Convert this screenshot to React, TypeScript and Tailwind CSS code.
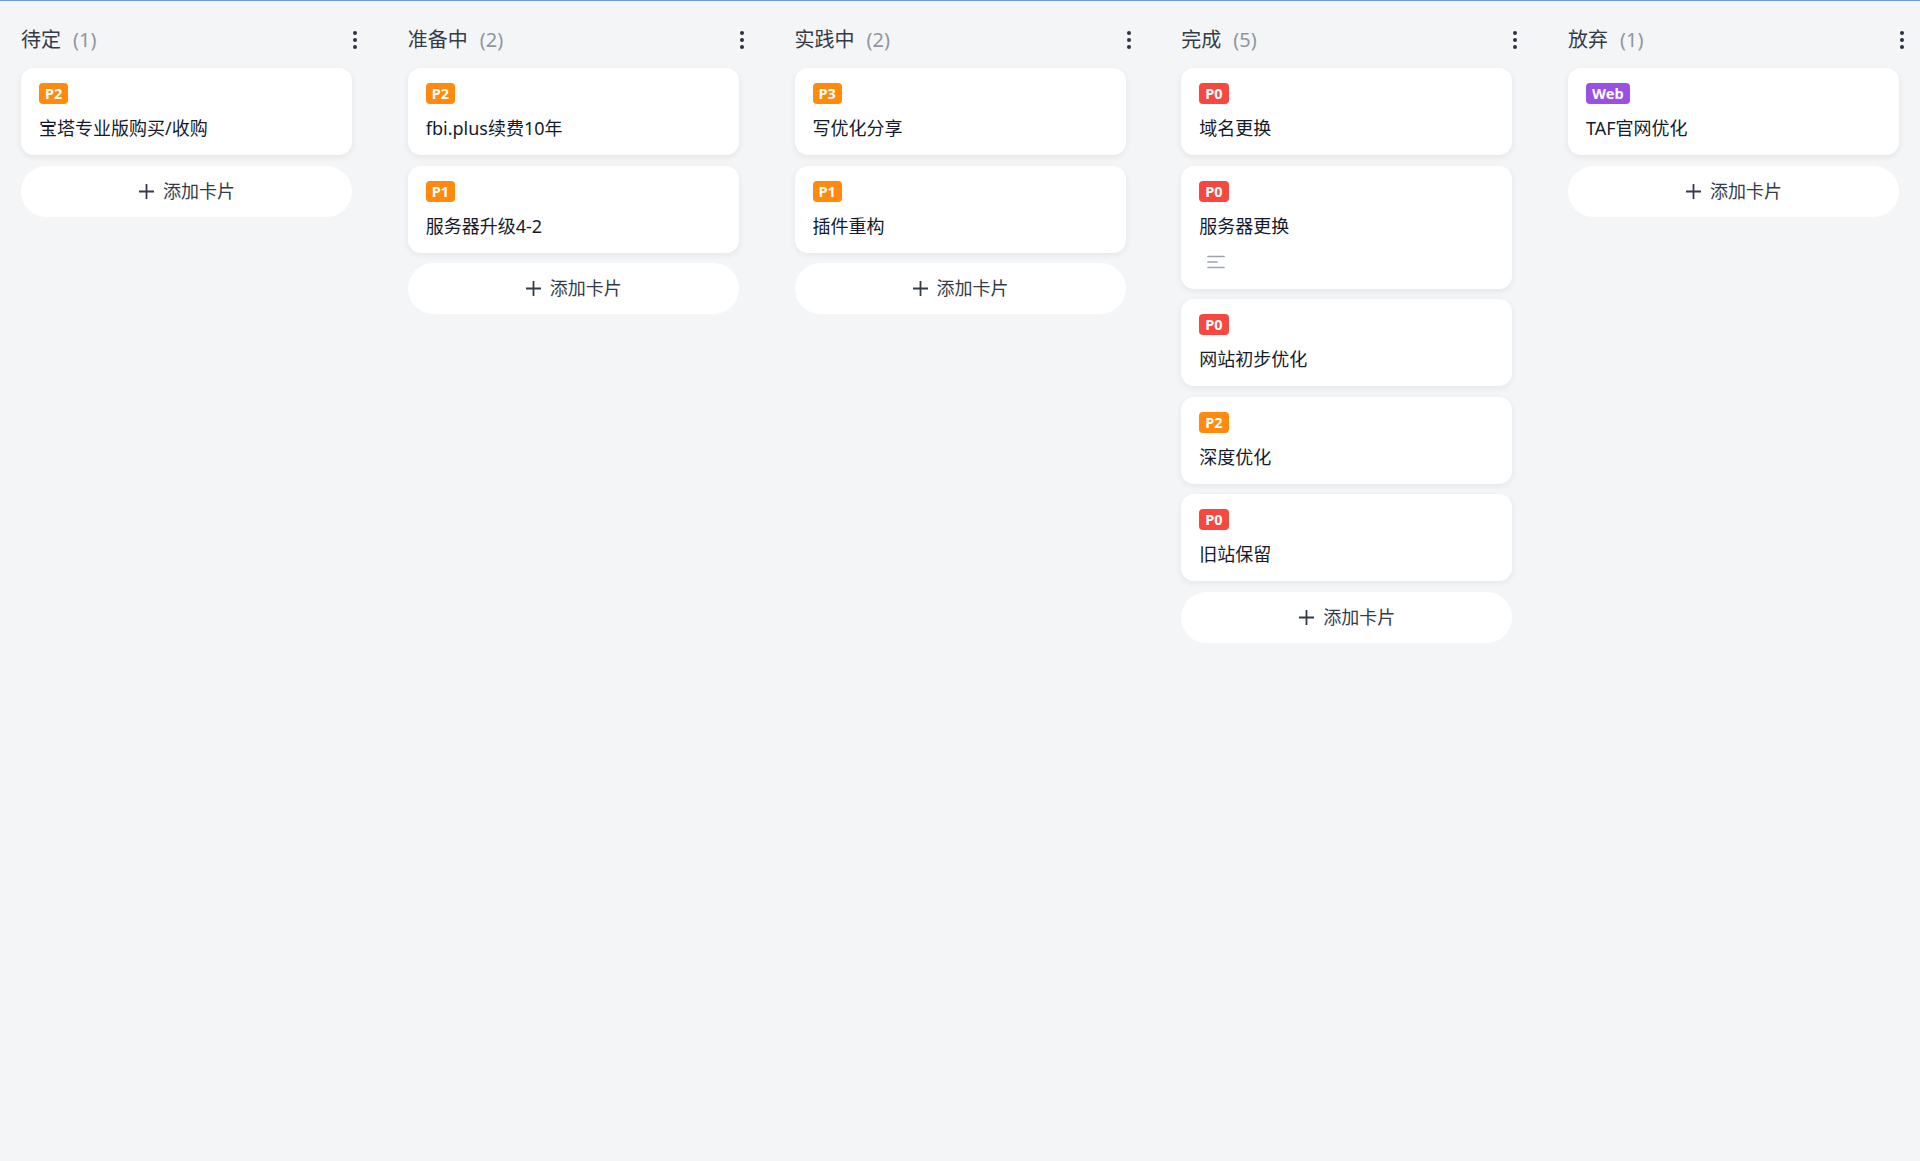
type Tag = 'P0' | 'P1' | 'P2' | 'P3' | 'Web';

type ICard = {
  tag: Tag;
  title: string;
  hasDesc?: boolean;
};

type IColumn = {
  title: string;
  cards: ICard[];
};

const columns: IColumn[] = [
  { title: '待定', cards: [{ tag: 'P2', title: '宝塔专业版购买/收购' }] },
  {
    title: '准备中',
    cards: [
      { tag: 'P2', title: 'fbi.plus续费10年' },
      { tag: 'P1', title: '服务器升级4-2' },
    ],
  },
  {
    title: '实践中',
    cards: [
      { tag: 'P3', title: '写优化分享' },
      { tag: 'P1', title: '插件重构' },
    ],
  },
  {
    title: '完成',
    cards: [
      { tag: 'P0', title: '域名更换' },
      { tag: 'P0', title: '服务器更换', hasDesc: true },
      { tag: 'P0', title: '网站初步优化' },
      { tag: 'P2', title: '深度优化' },
      { tag: 'P0', title: '旧站保留' },
    ],
  },
  { title: '放弃', cards: [{ tag: 'Web', title: 'TAF官网优化' }] },
];

const tagClass: Record<Tag, string> = {
  P0: 'bg-[#f6483f]',
  P1: 'bg-[#ff8a0d]',
  P2: 'bg-[#ff8a0d]',
  P3: 'bg-[#ff8a0d]',
  Web: 'bg-[#9c4fe3]',
};

function DescIcon() {
  return (
    <svg width="18" height="14" viewBox="0 0 18 14" fill="none">
      <path d="M1 1.5h16M1 7h9M1 12.5h16" stroke="#9ca3af" strokeWidth="1.7" strokeLinecap="round" />
    </svg>
  );
}

function PlusIcon() {
  return (
    <svg width="17" height="17" viewBox="0 0 17 17" fill="none">
      <path d="M8.5 1v15M1 8.5h15" stroke="#343b48" strokeWidth="1.8" />
    </svg>
  );
}

function TaskCard({ card }: { card: ICard }) {
  return (
    <div className="flex flex-col rounded-[13px] bg-white px-[18px] pt-[15px] pb-[13px] shadow-[0_2px_6px_rgba(15,23,42,0.07)]">
      <div className="flex">
        <span
          className={`flex h-[21px] items-center rounded-[4px] px-[6px] text-[14.5px] font-bold leading-none text-white ${tagClass[card.tag]}`}
        >
          {card.tag}
        </span>
      </div>
      <div className="mt-[10px] text-[18px] leading-[28px] text-[#141b2d]">{card.title}</div>
      {card.hasDesc && (
        <div className="mt-[8px] flex h-[28px] items-center pl-[8px]">
          <DescIcon />
        </div>
      )}
    </div>
  );
}

function Column({ column }: { column: IColumn }) {
  return (
    <div className="flex w-[331px] shrink-0 flex-col">
      <div className="mb-[12px] -mr-[7px] flex h-[32px] items-center justify-between">
        <div className="flex items-center text-[20px] leading-none">
          <span className="text-[#343b48]">{column.title}</span>
          <span className="ml-[12px] text-[#9096a2]">({column.cards.length})</span>
        </div>
        <div className="flex flex-col items-center gap-[3.3px] px-[2px]">
          <span className="h-[4px] w-[4px] rounded-full bg-[#2b3240]" />
          <span className="h-[4px] w-[4px] rounded-full bg-[#2b3240]" />
          <span className="h-[4px] w-[4px] rounded-full bg-[#2b3240]" />
        </div>
      </div>
      <div className="flex flex-col gap-[10.5px]">
        {column.cards.map((card) => (
          <TaskCard key={card.title} card={card} />
        ))}
        <button className="flex h-[51px] items-center justify-center gap-[8px] rounded-full bg-white text-[18px] text-[#343b48]">
          <PlusIcon />
          <span>添加卡片</span>
        </button>
      </div>
    </div>
  );
}

export default function App() {
  return (
    <div
      className="min-h-[1161px] w-full border-t border-[#6e9dda] bg-[#f4f5f7]"
      style={{ fontFamily: '"Noto Sans", "Noto Sans CJK SC", sans-serif' }}
    >
      <div className="flex gap-[55.75px] px-[21px] pt-[23px]">
        {columns.map((column) => (
          <Column key={column.title} column={column} />
        ))}
      </div>
    </div>
  );
}
